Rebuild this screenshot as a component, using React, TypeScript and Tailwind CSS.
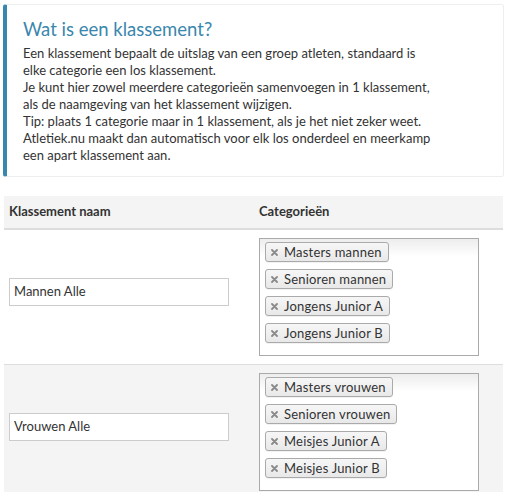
import React from "react";

const font = { fontFamily: "Lato, 'Noto Sans', sans-serif" };

function XIcon() {
  return (
    <svg width="7" height="7" viewBox="0 0 7 7" className="shrink-0">
      <path d="M1 1 L6 6 M6 1 L1 6" stroke="#8a8a8a" strokeWidth="1.8" strokeLinecap="round" />
    </svg>
  );
}

function Chip({ label }: { label: string }) {
  return (
    <div className="flex items-center h-[20px] border border-[#aaa] rounded-[3px] bg-gradient-to-b from-[#f6f6f6] via-[#f0f0f0] to-[#e8e8e8] shadow-[0_1px_0_rgba(0,0,0,0.05)] pl-[5px] pr-[6px] gap-[6px] text-[13px] tracking-[0.2px] text-[#333] leading-none">
      <XIcon />
      <span>{label}</span>
    </div>
  );
}

function Multi({ items }: { items: string[] }) {
  return (
    <div className="w-[220px] h-[118px] border border-[#aaa] bg-[linear-gradient(to_bottom,#eee_1%,#fff_15%)] pt-[3px] pl-[5px] flex flex-col items-start gap-[7px]">
      {items.map((i) => (
        <Chip key={i} label={i} />
      ))}
    </div>
  );
}

function Row({ name, items, bg }: { name: string; items: string[]; bg: string }) {
  return (
    <div className={`flex border-b border-[#ddd] ${bg}`}>
      <div className="w-[250px] pl-[5px] flex items-center pb-[10px]">
        <div className="w-[220px] h-[28px] border border-[#ccc] bg-white flex items-center px-[4px] text-[13px] text-[#333]">
          {name}
        </div>
      </div>
      <div className="flex-1 pl-[5px] py-[8px]">
        <Multi items={items} />
      </div>
    </div>
  );
}

export default function App() {
  return (
    <div className="w-[513px] h-[492px] overflow-hidden bg-white text-[#333]" style={font}>
      <div className="ml-[3px] mt-[4px] w-[501px] h-[173px] border border-[#eee] border-l-[4px] border-l-[#3a87ad] rounded-[3px] pl-[16px] pt-[12px]">
        <div className="text-[18.5px] leading-[24px] text-[#3a87ad]">Wat is een klassement?</div>
        <div className="text-[13px] leading-[17px] mt-[4px]">
          Een klassement bepaalt de uitslag van een groep atleten, standaard is
          <br />
          elke categorie een los klassement.
          <br />
          Je kunt hier zowel meerdere categorieën samenvoegen in 1 klassement,
          <br />
          als de naamgeving van het klassement wijzigen.
          <br />
          Tip: plaats 1 categorie maar in 1 klassement, als je het niet zeker weet.
          <br />
          Atletiek.nu maakt dan automatisch voor elk los onderdeel en meerkamp
          <br />
          een apart klassement aan.
        </div>
      </div>
      <div className="ml-[4px] mt-[19px] w-[499px]">
        <div className="flex h-[34px] bg-[#f4f4f4] border-b-2 border-[#ddd] items-center text-[13px] font-bold">
          <div className="w-[250px] pl-[5px]">Klassement naam</div>
          <div className="flex-1 pl-[5px]">Categorieën</div>
        </div>
        <Row
          name="Mannen Alle"
          bg="bg-white"
          items={["Masters mannen", "Senioren mannen", "Jongens Junior A", "Jongens Junior B"]}
        />
        <Row
          name="Vrouwen Alle"
          bg="bg-[#f4f4f4]"
          items={["Masters vrouwen", "Senioren vrouwen", "Meisjes Junior A", "Meisjes Junior B"]}
        />
      </div>
    </div>
  );
}
